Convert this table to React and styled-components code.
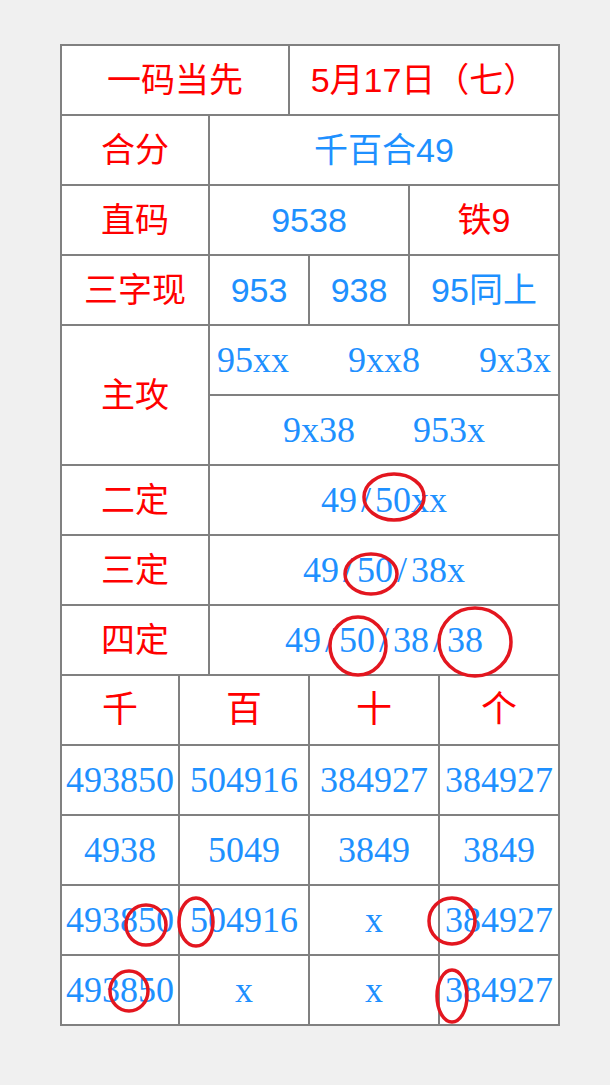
import React from 'react'
import styled, { createGlobalStyle } from 'styled-components'

const GlobalStyle = createGlobalStyle`
    html, body {
        margin: 0;
        padding: 0;
        background: #f0f0f0;
    }
`

const RED = '#ff0000'
const BLUE = '#1e90ff'
const LINE = '#808080'

const Page = styled.div`
    position: relative;
    width: 610px;
    min-height: 1085px;
    padding: 44px 0 0 60px;
    box-sizing: border-box;
`

const Sheet = styled.div`
    width: 500px;
    box-sizing: border-box;
    border-left: 2px solid ${LINE};
    border-top: 2px solid ${LINE};
    background: #fff;
`

const Section = styled.div`
    display: grid;
    grid-template-columns: ${p => p.$cols};
    grid-auto-rows: 70px;
`

const Cell = styled.div`
    box-sizing: border-box;
    border-right: 2px solid ${LINE};
    border-bottom: 2px solid ${LINE};
    display: flex;
    align-items: center;
    justify-content: center;
    gap: ${p => p.$gap || 0}px;
    white-space: nowrap;
    overflow: visible;
    grid-column: span ${p => p.$span || 1};
    grid-row: span ${p => p.$rows || 1};
    color: ${p => (p.$red ? RED : BLUE)};
    font-family: ${p => (p.$serif
        ? '"Liberation Serif", "Noto Sans CJK SC", serif'
        : '"Liberation Sans", "Noto Sans CJK SC", sans-serif')};
    font-size: ${p => (p.$serif ? 36 : 34)}px;
    line-height: 1;
`

// half-width slash, same advance as the digits around it
const Slash = styled.span`
    display: inline-block;
    width: 0.5em;
    text-align: center;
`

const Overlay = styled.svg`
    position: absolute;
    top: 0;
    left: 0;
    pointer-events: none;
`

// hand-drawn red marks over the numbers
const marks = [
    { cx: 394, cy: 497, rx: 30, ry: 23 },
    { cx: 371, cy: 574, rx: 26, ry: 20 },
    { cx: 358, cy: 646, rx: 28, ry: 29 },
    { cx: 475, cy: 642, rx: 36, ry: 34 },
    { cx: 146, cy: 925, rx: 20, ry: 20 },
    { cx: 196, cy: 922, rx: 17, ry: 24 },
    { cx: 452, cy: 921, rx: 23, ry: 23 },
    { cx: 129, cy: 991, rx: 19, ry: 20 },
    { cx: 452, cy: 996, rx: 15, ry: 26 },
]

const digits = [
    ['493850', '504916', '384927', '384927'],
    ['4938', '5049', '3849', '3849'],
    ['493850', '504916', 'x', '384927'],
    ['493850', 'x', 'x', '384927'],
]

function Slashed({ text }) {
    const parts = text.split('/')
    return parts.map((p, i) => (
        <React.Fragment key={i}>
            {i > 0 && <Slash>/</Slash>}
            {p}
        </React.Fragment>
    ))
}

export default function App() {
    return (
        <Page>
            <GlobalStyle />
            <Sheet>
                <Section $cols="228px 270px">
                    <Cell $red>一码当先</Cell>
                    <Cell $red>5月17日（七）</Cell>
                </Section>

                <Section $cols="148px 100px 100px 150px">
                    <Cell $red>合分</Cell>
                    <Cell $span={3}>千百合49</Cell>

                    <Cell $red>直码</Cell>
                    <Cell $span={2}>9538</Cell>
                    <Cell $red>铁9</Cell>

                    <Cell $red>三字现</Cell>
                    <Cell>953</Cell>
                    <Cell>938</Cell>
                    <Cell>95同上</Cell>

                    <Cell $red $rows={2}>主攻</Cell>
                    <Cell $span={3} $serif $gap={59}>
                        <span>95xx</span>
                        <span>9xx8</span>
                        <span>9x3x</span>
                    </Cell>
                    <Cell $span={3} $serif $gap={58}>
                        <span>9x38</span>
                        <span>953x</span>
                    </Cell>

                    <Cell $red>二定</Cell>
                    <Cell $span={3} $serif><span><Slashed text="49/50xx" /></span></Cell>
                    <Cell $red>三定</Cell>
                    <Cell $span={3} $serif><span><Slashed text="49/50/38x" /></span></Cell>
                    <Cell $red>四定</Cell>
                    <Cell $span={3} $serif><span><Slashed text="49/50/38/38" /></span></Cell>
                </Section>

                <Section $cols="118px 130px 130px 120px">
                    {['千', '百', '十', '个'].map(h => (
                        <Cell key={h} $red $serif>{h}</Cell>
                    ))}
                    {digits.map((row, i) =>
                        row.map((d, j) => (
                            <Cell key={`${i}-${j}`} $serif>{d}</Cell>
                        ))
                    )}
                </Section>
            </Sheet>

            <Overlay width="610" height="1085" viewBox="0 0 610 1085">
                {marks.map((m, i) => (
                    <ellipse
                        key={i}
                        cx={m.cx}
                        cy={m.cy}
                        rx={m.rx}
                        ry={m.ry}
                        fill="none"
                        stroke="#e3161f"
                        strokeWidth="3.5"
                    />
                ))}
            </Overlay>
        </Page>
    )
}
